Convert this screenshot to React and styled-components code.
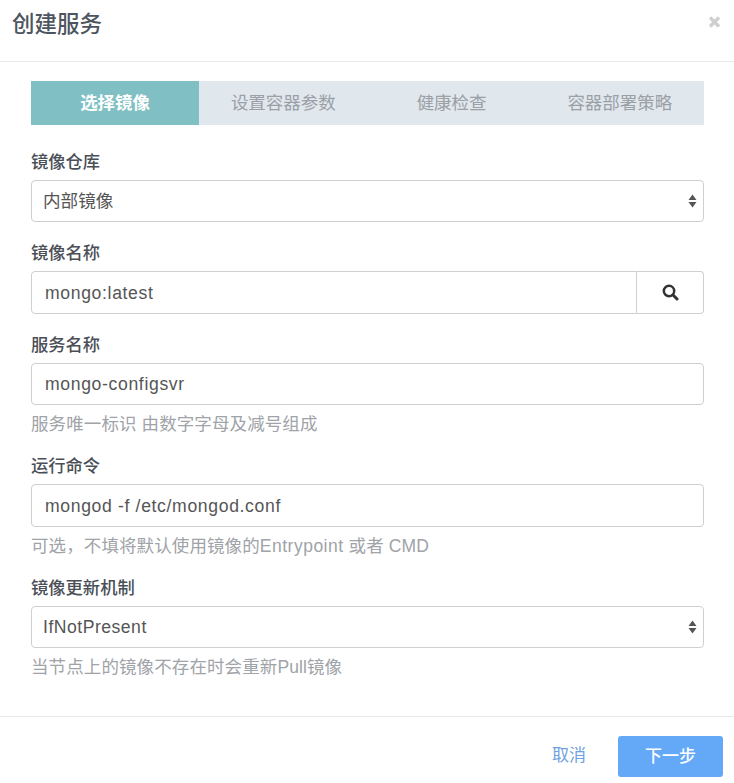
import React from "react";
import styled, { createGlobalStyle } from "styled-components";

const Global = createGlobalStyle`
  html, body { margin: 0; padding: 0; background: #fff; }
  body { font-family: "Liberation Sans", "Noto Sans CJK SC", sans-serif; }
  * { box-sizing: border-box; }
`;

const Modal = styled.div`
  width: 734px;
  height: 783px;
  display: flex;
  flex-direction: column;
  background: #fff;
`;

const Header = styled.header`
  height: 62px;
  flex: none;
  border-bottom: 1px solid #e9e9e9;
  padding: 0 13px 0 12px;
  display: flex;
  justify-content: space-between;
  align-items: flex-start;
`;

const Title = styled.h1`
  margin: 9px 0 0;
  font-size: 22.5px;
  line-height: 32px;
  font-weight: 500;
  color: #4d5560;
`;

const Close = styled.span`
  margin-top: 15px;
  display: flex;
`;

const Body = styled.main`
  flex: 1;
  padding: 19px 30px 0 31px;
`;

const Steps = styled.ol`
  margin: 0 0 25px;
  padding: 0;
  list-style: none;
  height: 44px;
  display: grid;
  grid-template-columns: repeat(4, 1fr);
  background: #e0e7ed;
`;

const Step = styled.li`
  display: flex;
  align-items: center;
  justify-content: center;
  padding-bottom: 3px;
  font-size: 17.5px;
  font-weight: ${(p) => (p.$active ? 700 : 400)};
  color: ${(p) => (p.$active ? "#fff" : "#9aa0a6")};
  background: ${(p) => (p.$active ? "#80bfc3" : "transparent")};
`;

const Field = styled.div`
  margin-bottom: ${(p) => p.$gap}px;
`;

const Label = styled.label`
  display: block;
  height: 24px;
  line-height: 24px;
  margin-bottom: 6px;
  font-size: 17.3px;
  font-weight: 500;
  color: #4a4f57;
`;

const Control = styled.div`
  height: ${(p) => p.$h || 42}px;
  border: 1px solid #cfcfcf;
  border-radius: 4px;
  display: flex;
  align-items: center;
  padding: 1px 0 0 13px;
  font-size: 17.6px;
  letter-spacing: 0.65px;
  color: #555;
  background: #fff;
`;

const SelectBox = styled(Control)`
  padding: 0 6px 0 11px;
  justify-content: space-between;
`;

const SelectValue = styled.span`
  padding-bottom: ${(p) => (p.$cjk ? 3 : 0)}px;
  letter-spacing: ${(p) => (p.$cjk ? 0 : 0.5)}px;
`;

const Group = styled.div`
  display: flex;
  height: 43px;
`;

const GroupInput = styled(Control)`
  flex: 1;
  height: 43px;
  border-radius: 4px 0 0 4px;
`;

const SearchButton = styled.div`
  width: 67px;
  border: 1px solid #cfcfcf;
  border-left: 0;
  border-radius: 0 4px 4px 0;
  display: flex;
  align-items: center;
  justify-content: center;
`;

const Help = styled.p`
  margin: 7px 0 0;
  height: 24px;
  line-height: 24px;
  font-size: 17.5px;
  letter-spacing: 0.1px;
  color: #a0a3a8;
`;

const Latin = styled.span`
  letter-spacing: 0.5px;
`;

const Footer = styled.footer`
  height: 67px;
  flex: none;
  border-top: 1px solid #e9e9e9;
  padding: 19px 11px 0 0;
  display: flex;
  justify-content: flex-end;
  align-items: flex-start;
  gap: 32px;
`;

const Cancel = styled.span`
  height: 40px;
  line-height: 40px;
  font-size: 17px;
  color: #6ea2de;
`;

const Next = styled.span`
  width: 105px;
  height: 41px;
  padding-bottom: 4px;
  border-radius: 3px;
  background: #64a8f8;
  color: #fff;
  font-size: 17px;
  font-weight: 500;
  display: flex;
  align-items: center;
  justify-content: center;
`;

const Arrows = () => (
  <svg width="9" height="14" viewBox="0 0 9 14">
    <path d="M4.5 0.5 L8.5 6 H0.5 Z M0.5 8 H8.5 L4.5 13.5 Z" fill="#555" />
  </svg>
);

const Select = ({ children, cjk }) => (
  <SelectBox>
    <SelectValue $cjk={cjk}>{children}</SelectValue>
    <Arrows />
  </SelectBox>
);

export default function App() {
  return (
    <Modal>
      <Global />
      <Header>
        <Title>创建服务</Title>
        <Close>
          <svg width="13" height="14" viewBox="0 0 13 14">
            <path d="M2 2.5 L11 11.5 M11 2.5 L2 11.5" stroke="#cfcfcf" strokeWidth="3.4" />
          </svg>
        </Close>
      </Header>
      <Body>
        <Steps>
          <Step $active>选择镜像</Step>
          <Step>设置容器参数</Step>
          <Step>健康检查</Step>
          <Step>容器部署策略</Step>
        </Steps>
        <Field $gap={19}>
          <Label>镜像仓库</Label>
          <Select cjk>内部镜像</Select>
        </Field>
        <Field $gap={19}>
          <Label>镜像名称</Label>
          <Group>
            <GroupInput>mongo:latest</GroupInput>
            <SearchButton>
              <svg width="17" height="17" viewBox="0 0 17 17">
                <circle cx="7" cy="7" r="5.2" fill="none" stroke="#333" strokeWidth="2.5" />
                <path d="M10.8 10.8 L15 15" stroke="#333" strokeWidth="3" strokeLinecap="round" />
              </svg>
            </SearchButton>
          </Group>
        </Field>
        <Field $gap={18}>
          <Label>服务名称</Label>
          <Control>mongo-configsvr</Control>
          <Help>服务唯一标识 由数字字母及减号组成</Help>
        </Field>
        <Field $gap={18}>
          <Label>运行命令</Label>
          <Control $h={43}>mongod -f /etc/mongod.conf</Control>
          <Help>可选，不填将默认使用镜像的<Latin>Entrypoint</Latin> 或者 CMD</Help>
        </Field>
        <Field $gap={0}>
          <Label>镜像更新机制</Label>
          <Select>IfNotPresent</Select>
          <Help>当节点上的镜像不存在时会重新Pull镜像</Help>
        </Field>
      </Body>
      <Footer>
        <Cancel>取消</Cancel>
        <Next>下一步</Next>
      </Footer>
    </Modal>
  );
}
